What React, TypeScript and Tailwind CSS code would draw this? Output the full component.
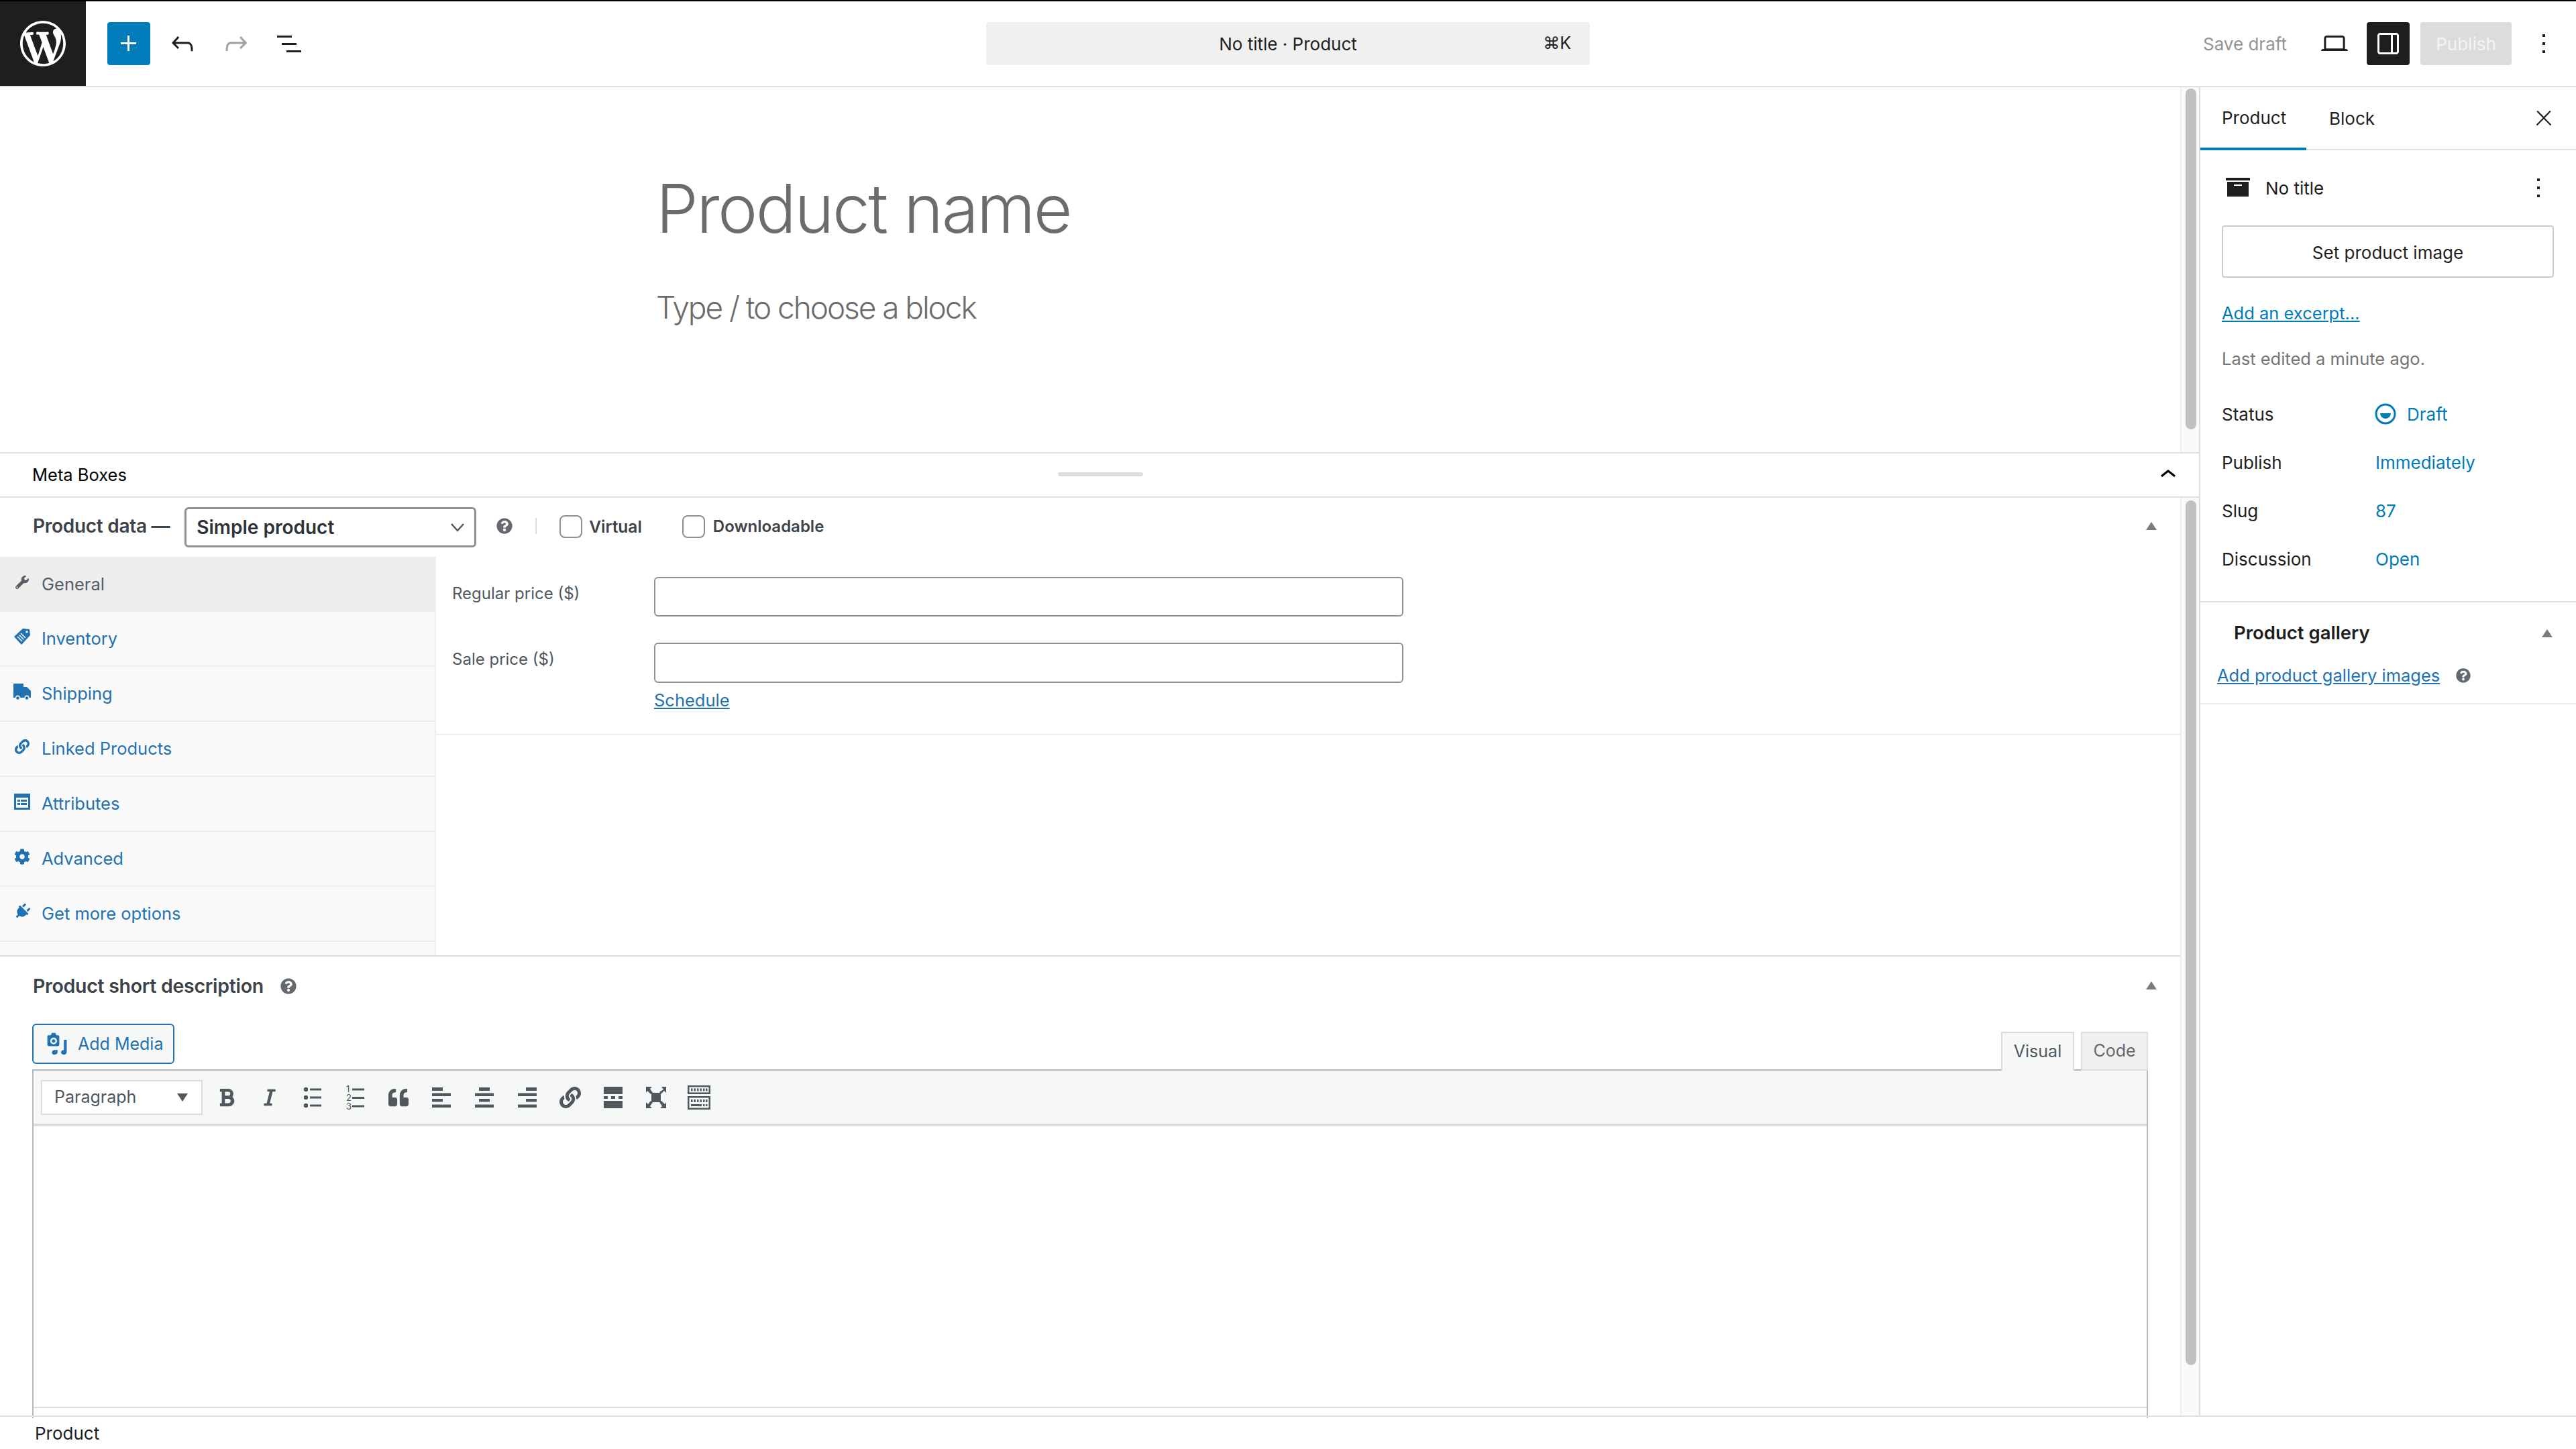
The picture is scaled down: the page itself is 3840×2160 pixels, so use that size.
import React from 'react';
import { FaWrench, FaLink, FaCog, FaPlug, FaQuestionCircle, FaBold, FaItalic, FaQuoteLeft, FaLink as FaChain } from 'react-icons/fa';

const Gb: React.FC<{ d: string; className?: string; size?: number }> = ({ d, className = '', size = 48 }) => (
  <svg viewBox="0 0 24 24" width={size} height={size} fill="currentColor" fillRule="evenodd" className={className}>
    <path d={d} />
  </svg>
);

const WP_LOGO =
  'M20 10c0-5.51-4.49-10-10-10C4.48 0 0 4.49 0 10c0 5.52 4.48 10 10 10 5.51 0 10-4.48 10-10zM7.78 15.37L4.37 6.22c.55-.02 1.17-.08 1.17-.08.5-.06.44-1.13-.06-1.11 0 0-1.45.11-2.37.11-.18 0-.37 0-.58-.01C4.12 2.69 6.87 1.11 10 1.11c2.33 0 4.45.87 6.05 2.34-.68-.11-1.65.39-1.65 1.58 0 .74.45 1.36.9 2.1.35.61.55 1.36.55 2.46 0 1.49-1.4 5-1.4 5l-3.03-8.37c.54-.02.82-.17.82-.17.5-.05.44-1.25-.06-1.22 0 0-1.44.12-2.38.12-.87 0-2.33-.12-2.33-.12-.5-.03-.56 1.2-.06 1.22l.92.08 1.26 3.41zM17.41 10c.24-.64.74-1.87.43-4.25.7 1.29 1.05 2.71 1.05 4.25 0 3.29-1.73 6.24-4.4 7.78.97-2.59 1.94-5.2 2.92-7.78zM6.1 18.09C3.12 16.65 1.11 13.53 1.11 10c0-1.3.23-2.48.72-3.59C3.25 10.3 4.67 14.2 6.1 18.09zm4.03-6.63l2.58 6.98c-.86.29-1.76.45-2.71.45-.79 0-1.57-.11-2.29-.33.81-2.38 1.62-4.74 2.42-7.1z';
const MORE = 'M13 19h-2v-2h2v2zm0-6h-2v-2h2v2zm0-6h-2V5h2v2z';

const Triangle: React.FC = () => (
  <svg width="16" height="12" viewBox="0 0 16 12" fill="#787c82">
    <path d="M8 0l8 12H0z" />
  </svg>
);

const TagIcon: React.FC = () => (
  <svg width="26" height="26" viewBox="0 0 26 26" fill="currentColor">
    <path d="M14 1l10 1 1 9-13 14L1 13 14 1z" />
    <path d="M6 13l7 7M8.500 10.500l7 7M11 8l7 7" stroke="#fafafa" strokeWidth="1.500" />
    <circle cx="20" cy="6" r="1.800" fill="#fafafa" />
  </svg>
);

const TableIcon: React.FC = () => (
  <svg width="26" height="26" viewBox="0 0 26 26" fill="currentColor">
    <path d="M1 1h24v24H1zM4 7v15h18V7z" fillRule="evenodd" />
    <path d="M6 10h4v3H6zM11 10h9v3h-9zM6 15h4v3H6zM11 15h9v3h-9z" />
  </svg>
);

const TruckIcon: React.FC = () => (
  <svg width="26" height="24" viewBox="0 0 26 24" fill="currentColor">
    <path d="M0 0h15v5h5l6 6v10h-2.500a3.500 3.500 0 00-7 0H10a3.500 3.500 0 00-7 0H0z" />
    <circle cx="6.500" cy="21.500" r="2.300" />
    <circle cx="20" cy="21.500" r="2.300" />
  </svg>
);

const tabs = [
  { label: 'General', icon: <FaWrench size={20} /> },
  { label: 'Inventory', icon: <TagIcon /> },
  { label: 'Shipping', icon: <TruckIcon /> },
  { label: 'Linked Products', icon: <FaLink size={22} /> },
  { label: 'Attributes', icon: <TableIcon /> },
  { label: 'Advanced', icon: <FaCog size={24} /> },
  { label: 'Get more options', icon: <FaPlug size={24} className="rotate-45" /> },
];

const AlignIcon: React.FC<{ align: 'l' | 'c' | 'r' }> = ({ align }) => {
  const x = align === 'l' ? 6 : align === 'c' ? 12 : 18;
  return (
    <svg width="40" height="40" viewBox="0 0 40 40" fill="currentColor">
      <rect x={x} y="5" width="16" height="5" />
      <rect x="6" y="13.500" width="28" height="4.500" />
      <rect x={x} y="22" width="16" height="4.500" />
      <rect x="6" y="30.500" width="28" height="4.500" />
    </svg>
  );
};

const toolbar = [
  <FaBold size={30} />,
  <FaItalic size={28} />,
  <svg width="40" height="40" viewBox="0 0 40 40" fill="currentColor">
    <circle cx="10" cy="8" r="3.200" />
    <circle cx="10" cy="20" r="3.200" />
    <circle cx="10" cy="32" r="3.200" />
    <rect x="16" y="6.500" width="17" height="3" />
    <rect x="16" y="18.500" width="17" height="3" />
    <rect x="16" y="30.500" width="17" height="3" />
  </svg>,
  <svg width="40" height="40" viewBox="0 0 40 40" fill="currentColor" fontSize="13" fontFamily="Inter, sans-serif">
    <text x="6" y="12">1</text>
    <text x="6" y="25">2</text>
    <text x="6" y="38">3</text>
    <rect x="15" y="6.500" width="18" height="3" />
    <rect x="15" y="19" width="18" height="3" />
    <rect x="15" y="31.500" width="18" height="3" />
  </svg>,
  <FaQuoteLeft size={30} />,
  <AlignIcon align="l" />,
  <AlignIcon align="c" />,
  <AlignIcon align="r" />,
  <FaChain size={32} />,
  <svg width="40" height="40" viewBox="0 0 40 40" fill="currentColor">
    <rect x="6" y="4" width="28" height="11" />
    <rect x="6" y="18" width="6" height="4" />
    <rect x="17" y="18" width="6" height="4" />
    <rect x="28" y="18" width="6" height="4" />
    <rect x="6" y="25" width="28" height="11" />
  </svg>,
  <svg width="40" height="40" viewBox="0 0 40 40" fill="currentColor">
    <rect x="13" y="13" width="14" height="14" />
    <path d="M5 4h9l-3 3 4 6-3 2-5-5-2 3zM35 4v9l-3-3-5 5-2-3 6-4-3-4zM5 36v-9l3 3 4-5 3 2-4 6 3 3zM35 36h-9l3-3-4-6 3-2 5 5 2-3z" />
  </svg>,
  <svg width="40" height="40" viewBox="0 0 40 40" fill="currentColor" fillRule="evenodd">
    <path d="M3 2h34v13H3zM5.500 4.500v8h29v-8z" />
    <path d="M8 6.500h2.500v4H8zM12.500 6.500H15v4h-2.500zM17 6.500h2.500v4H17zM21.500 6.500H24v4h-2.500zM26 6.500h2.500v4H26zM30 6.500h2.500v4H30z" />
    <path d="M3 18h34v20H3zM5.500 20.500v15h29v-15z" />
    <path d="M8 23h2.500v4H8zM12.500 23H15v4h-2.500zM17 23h2.500v4H17zM21.500 23H24v4h-2.500zM26 23h2.500v4H26zM30 23h2.500v4H30zM8 30h16v3H8zM26 30h2.500v3H26zM30 30h2.500v3H30z" />
  </svg>,
];

const ScrollTrack: React.FC<{ thumb: string }> = ({ thumb }) => (
  <div className="w-[28px] shrink-0 bg-[#fafafa] border-l-2 border-[#ededed] pl-[6px]">
    <div className={`w-[16px] bg-[#c1c1c1] rounded-full ${thumb}`} />
  </div>
);

const rows = [
  { label: 'Publish', value: 'Immediately' },
  { label: 'Slug', value: '87' },
  { label: 'Discussion', value: 'Open' },
];

export default function App() {
  return (
    <div className="w-[3840px] h-[2160px] overflow-hidden flex flex-col bg-white font-['Inter',sans-serif] text-[26px] text-[#1e1e1e]">
      {/* top bar */}
      <header className="h-[130px] shrink-0 border-t-2 border-t-black border-b-2 border-b-[#e0e0e0] grid grid-cols-[1fr_900px_1fr] items-center">
        <div className="flex items-center h-full">
          <div className="w-[128px] h-full bg-[#1e1e1e] flex items-center justify-center">
            <svg viewBox="0 0 20 20" width="68" height="68" fill="#fff">
              <path d={WP_LOGO} />
            </svg>
          </div>
          <button className="ml-[32px] w-[64px] h-[64px] rounded-[4px] bg-[#007cba] text-white flex items-center justify-center">
            <Gb d="M11 12.500V17.500H12.500V12.500H17.500V11H12.500V6H11V11H6V12.500H11Z" />
          </button>
          <Gb className="ml-[24px]" d="M18.300 11.700c-.6-.6-1.400-.9-2.300-.9H6.700l2.900-3.300-1.100-1-4.500 5L8.500 16l1-1-2.700-2.700H16c.5 0 .9.2 1.300.5 1 1 1 3.400 1 4.500v.3h1.500v-.2c0-1.500 0-4.300-1.500-5.700z" />
          <Gb className="ml-[32px] text-[#a0a0a0]" d="M15.600 6.500l-1.100 1 2.900 3.300H8c-.9 0-1.700.3-2.300.9-1.400 1.500-1.400 4.200-1.400 5.600v.2h1.500v-.3c0-1.100 0-3.500 1-4.500.3-.3.7-.5 1.300-.5h9.200L14.500 15l1.100 1.100 4.600-4.600-4.600-5z" />
          <Gb className="ml-[31px]" d="M3 6h11v1.500H3V6Zm3.500 5.500h11V13h-11v-1.500ZM21 17H10v1.500h11V17Z" />
        </div>
        <div className="relative h-[64px] rounded-[4px] bg-[#f0f0f0] flex items-center justify-center">
          <span>No title · Product</span>
          <span className="absolute right-[28px] text-[25px]">⌘K</span>
        </div>
        <div className="flex items-center justify-end pr-[24px]">
          <span className="text-[#949494]">Save draft</span>
          <Gb className="ml-[47px]" d="M20.500 16h-.7V8c0-1.100-.9-2-2-2H6.200c-1.100 0-2 .9-2 2v8h-.7c-.8 0-1.500.7-1.500 1.500h20c0-.8-.7-1.500-1.500-1.500zM5.700 8c0-.3.2-.5.5-.5h11.600c.3 0 .5.2.5.5v7.600H5.700V8z" />
          <button className="ml-[24px] w-[64px] h-[64px] rounded-[4px] bg-[#1e1e1e] text-white flex items-center justify-center">
            <Gb d="M18 4H6c-1.100 0-2 .9-2 2v12c0 1.100.9 2 2 2h12c1.100 0 2-.9 2-2V6c0-1.100-.9-2-2-2zm-4 14.500H6c-.3 0-.5-.2-.5-.5V6c0-.3.2-.5.5-.5h8v13zm4.500-.5c0 .3-.2.5-.5.5h-2.500v-13H18c.3 0 .5.2.5.5v12z" />
          </button>
          <button className="ml-[16px] w-[136px] h-[64px] rounded-[4px] bg-[#dcdcdc] text-[#f4f4f4]">Publish</button>
          <Gb className="ml-[24px]" d={MORE} />
        </div>
      </header>

      <div className="h-[1980px] flex">
        {/* editor + meta boxes */}
        <div className="w-[3278px] flex flex-col">
          <div className="h-[546px] shrink-0 flex border-b-2 border-[#e0e0e0]">
            <div className="flex-1 pl-[980px] text-[#6c6c6c] font-light">
              <h1 className="mt-[113px] -ml-[2px] text-[100px] leading-[136px] tracking-[-0.025em]">Product name</h1>
              <p className="mt-[48px] -ml-[2px] text-[46px] leading-[62px] tracking-[-0.045em]">Type / to choose a block</p>
            </div>
            <ScrollTrack thumb="h-[508px] mt-[2px]" />
          </div>

          <div className="h-[66px] shrink-0 relative flex items-center justify-between pl-[48px] pr-[22px] border-b-2 border-[#e0e0e0] text-black">
            <span className="text-[25.500px] mt-[1px]">Meta Boxes</span>
            <span className="absolute left-[1577px] top-[28px] w-[127px] h-[6px] rounded-full bg-[#ddd]" />
            <Gb d="M6.500 12.400L12 8l5.500 4.400-.9 1.200L12 10l-4.500 3.600-1-1.200z" className="text-black" />
          </div>

          <div className="flex-1 min-h-0 flex">
            <div className="w-[3250px] flex flex-col">
              {/* product data */}
              <div className="h-[88px] shrink-0 flex items-center pl-[49px] pr-[35px] pb-[4px] text-[#3c434a]">
                <span className="font-semibold text-[28px] tracking-[-0.01em]">Product data —</span>
                <div className="ml-[22px] mt-[4px] w-[435px] h-[60px] rounded-[6px] border-[3px] border-[#8c8f94] pl-[15px] pr-[14px] flex items-center justify-between">
                  <span className="font-semibold text-[28px] text-[#2c3338]">Simple product</span>
                  <svg width="22" height="22" viewBox="0 0 22 22" fill="none" stroke="#50575e" strokeWidth="2.500">
                    <path d="M2 6l9 10 9-10" />
                  </svg>
                </div>
                <FaQuestionCircle size={24} className="ml-[30px] text-[#646970]" />
                <span className="ml-[34px] w-[2px] h-[24px] bg-[#dcdcde]" />
                <span className="ml-[34px] mt-[2px] w-[34px] h-[34px] rounded-[8px] border-2 border-[#8c8f94]" />
                <span className="ml-[10px] mt-[2px] text-[24.500px] font-semibold">Virtual</span>
                <span className="ml-[60px] mt-[2px] w-[34px] h-[34px] rounded-[8px] border-2 border-[#8c8f94]" />
                <span className="ml-[12px] mt-[2px] text-[24px] font-semibold">Downloadable</span>
                <span className="ml-auto">
                  <Triangle />
                </span>
              </div>

              <div className="h-[596px] shrink-0 flex border-b-2 border-[#ddd]">
                <ul className="w-[650px] shrink-0 bg-[#fafafa] border-r-2 border-[#eee]">
                  {tabs.map((t, i) => (
                    <li
                      key={t.label}
                      className={
                        i === 0
                          ? 'h-[82px] flex items-center bg-[#eee] text-[#555d66]'
                          : 'h-[82px] flex items-center border-b-2 border-[#eee] text-[#2271b1]'
                      }
                    >
                      <span className="w-[62px] flex justify-center pl-[4px] -mt-[6px]">{t.icon}</span>
                      <span className="text-[25.500px] mt-[1px]">{t.label}</span>
                    </li>
                  ))}
                </ul>
                <div className="flex-1">
                  <div className="h-[266px] border-b-2 border-[#eee] pt-[30px] pl-[24px]">
                    <div className="flex items-center h-[59px]">
                      <label className="w-[301px] text-[24px] text-[#50575e] -mt-[10px]">Regular price ($)</label>
                      <input className="w-[1117px] h-[59px] rounded-[6px] border-2 border-[#8c8f94] bg-white" />
                    </div>
                    <div className="flex items-center h-[60px] mt-[39px]">
                      <label className="w-[301px] text-[24px] text-[#50575e] -mt-[10px]">Sale price ($)</label>
                      <input className="w-[1117px] h-[60px] rounded-[6px] border-2 border-[#8c8f94] bg-white" />
                    </div>
                    <a className="block ml-[301px] mt-[7px] text-[25.500px] text-[#2271b1] underline">Schedule</a>
                  </div>
                </div>
              </div>

              {/* short description */}
              <div className="flex-1 min-h-0 pl-[48px] pr-[48px]">
                <div className="h-[88px] flex items-center text-[#3c434a]">
                  <span className="font-semibold text-[28.500px] tracking-[-0.01em] ml-[1px]">Product short description</span>
                  <FaQuestionCircle size={24} className="ml-[25px] text-[#646970]" />
                  <span className="ml-auto -mr-[13px] -mt-[2px]">
                    <Triangle />
                  </span>
                </div>
                <div className="h-[70px] mt-[12px] -mb-[2px] flex justify-between items-start relative z-10">
                  <button className="h-[60px] w-[212px] rounded-[6px] border-2 border-[#2271b1] bg-[#f6f7f7] text-[#2271b1] flex items-center pl-[18px]">
                    <svg width="34" height="34" viewBox="0 0 36 40" fill="currentColor" fillRule="evenodd">
                      <path d="M3 5h4l2-4h6l2 4h3c1 0 2 1 2 2v14c0 2-1 3-3 3H4c-2 0-3-1-3-3V7c0-1 1-2 2-2zm9 4a6 6 0 100 12 6 6 0 000-12z" />
                      <circle cx="12" cy="15" r="3" />
                      <path d="M30 13h5v21c0 3-2 5-5 5s-5-2-5-4 2-4 5-4zM13 39c-3 0-4-2-4-4s2-4 5-4h5v4c0 2-2 4-6 4z" />
                    </svg>
                    <span className="ml-[14px] mt-[2px] text-[25px]">Add Media</span>
                  </button>
                  <div className="flex self-end items-end gap-[10px] text-[#50575e]">
                    <span className="h-[58px] w-[109px] bg-[#f6f7f7] border-x-2 border-t-2 border-[#dcdcde] flex items-center justify-center text-[25px]">Visual</span>
                    <span className="h-[58px] w-[100px] bg-[#f0f0f1] border-2 border-[#dcdcde] flex items-center justify-center text-[25px] text-[#646970]">Code</span>
                  </div>
                </div>
                <div className="h-[520px] border-x-2 border-t-2 border-[#b4b9be]">
                  <div className="h-[83px] bg-[#f6f7f7] border-b-4 border-[#dcdcde] flex items-center pl-[11px] text-[#50575e]">
                    <div className="w-[241px] h-[52px] bg-white border-2 border-[#dcdcde] flex items-center justify-between pl-[18px] pr-[20px]">
                      <span className="text-[25px]">Paragraph</span>
                      <svg width="16" height="12" viewBox="0 0 16 12" fill="#50575e">
                        <path d="M0 0h16L8 12z" />
                      </svg>
                    </div>
                    <div className="ml-[4px] flex">
                      {toolbar.map((icon, i) => (
                        <span key={i} className="w-[64px] h-[48px] flex items-center justify-center">
                          {icon}
                        </span>
                      ))}
                    </div>
                  </div>
                  <div className="h-[420px] border-b-2 border-[#dcdcde]" />
                </div>
              </div>
            </div>
            <ScrollTrack thumb="h-[1289px] mt-[4px]" />
          </div>
        </div>

        {/* settings sidebar */}
        <aside className="w-[562px] shrink-0 border-l-2 border-[#dcdcdc] flex flex-col">
          <div className="h-[94px] shrink-0 flex items-center border-b-2 border-[#e0e0e0]">
            <div className="w-[158px] h-[94px] -mb-[2px] border-b-4 border-[#007cba] pl-[32px] flex items-center">Product</div>
            <div className="ml-[34px]">Block</div>
            <Gb size={36} className="ml-auto mr-[30px]" d="M13 11.800l6.100-6.300-1-1-6.100 6.200-6.100-6.200-1 1 6.100 6.300-6.500 6.700 1 1 6.500-6.600 6.500 6.600 1-1z" />
          </div>
          <div className="h-[674px] shrink-0 border-b-2 border-[#e0e0e0] pl-[32px] pr-[32px]">
            <div className="h-[112px] flex items-center">
              <svg width="36" height="28" viewBox="0 0 36 28" fill="#1e1e1e" className="ml-[6px] -mt-[2px]">
                <path fillRule="evenodd" d="M0 0h36v4H0zM2 6h32v22H2zM12 10v2h12v-2z" />
              </svg>
              <span className="ml-[23px]">No title</span>
              <Gb className="ml-auto" d={MORE} />
            </div>
            <button className="w-[495px] h-[78px] rounded-[4px] border-2 border-[#ccc] pt-[2px]">Set product image</button>
            <a className="block mt-[36px] leading-[34px] text-[25.500px] text-[#007cba] underline">Add an excerpt...</a>
            <p className="mt-[35px] text-[#757575] leading-[32px] text-[25.500px]">Last edited a minute ago.</p>
            <div className="mt-[30px]">
              <div className="h-[72px] flex items-center">
                <span className="w-[228px]">Status</span>
                <svg width="32" height="32" viewBox="0 0 32 32" className="text-[#007cba]" fill="currentColor">
                  <circle cx="16" cy="16" r="14" fill="none" stroke="currentColor" strokeWidth="3" />
                  <path d="M8 15h16a8 8 0 01-16 0z" />
                </svg>
                <span className="ml-[16px] text-[#007cba]">Draft</span>
              </div>
              {rows.map(r => (
                <div key={r.label} className="h-[72px] flex items-center">
                  <span className="w-[229px]">{r.label}</span>
                  <span className="text-[#007cba]">{r.value}</span>
                </div>
              ))}
            </div>
          </div>
          <div className="h-[152px] shrink-0 border-b-2 border-[#f0f0f0] pl-[25px] pr-[35px]">
            <div className="h-[92px] flex items-center justify-between pl-[25px]">
              <span className="font-semibold text-[27.500px]">Product gallery</span>
              <Triangle />
            </div>
            <div className="flex items-center -mt-[2px] text-[25.500px] text-[#2271b1]">
              <a className="underline">Add product gallery images</a>
              <FaQuestionCircle size={22} className="ml-[24px] text-[#646970]" />
            </div>
          </div>
        </aside>
      </div>

      <footer className="h-[50px] shrink-0 border-t-2 border-[#e0e0e0] pl-[52px] flex items-center">Product</footer>
    </div>
  );
}
